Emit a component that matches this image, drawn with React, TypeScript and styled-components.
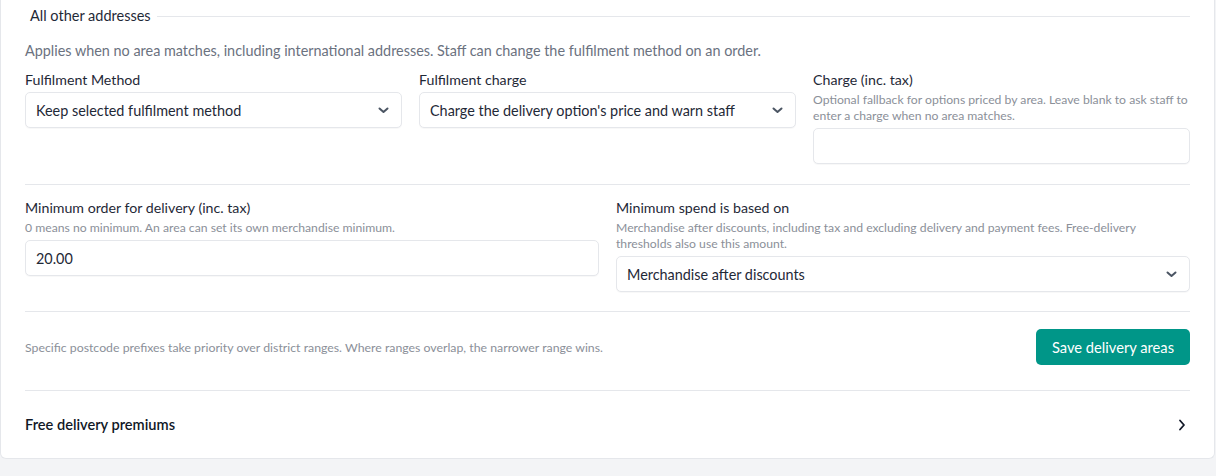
import React from "react";
import styled, { createGlobalStyle } from "styled-components";

const GlobalStyle = createGlobalStyle`
  html, body {
    margin: 0;
    padding: 0;
    background: #f3f4f6;
  }
  body {
    font-family: Lato, "Noto Sans", "Liberation Sans", sans-serif;
    color: #1f2937;
    -webkit-font-smoothing: antialiased;
  }
  * {
    box-sizing: border-box;
  }
`;

const Page = styled.div`
  padding-bottom: 17px;
`;

const Card = styled.div`
  width: 1215px;
  background: #ffffff;
  border: 1px solid #e5e7eb;
  border-top: none;
  border-radius: 0 0 6px 6px;
  padding: 0 24px;
`;

const Fieldset = styled.section`
  padding: 7px 0 20px;
  border-bottom: 1px solid #e5e7eb;
`;

const LegendRow = styled.div`
  display: flex;
  align-items: center;
  gap: 6px;
  font-size: 14.5px;
  line-height: 18px;
  color: #1f2937;
  padding-left: 5px;

  &:after {
    content: "";
    flex: 1;
    height: 1px;
    background: #e5e7eb;
  }
`;

const Intro = styled.p`
  margin: 16px 0 9px;
  font-size: 14.4px;
  line-height: 20px;
  color: #6b7280;
`;

const Grid = styled.div<{ $cols: number }>`
  display: grid;
  grid-template-columns: repeat(${p => p.$cols}, 1fr);
  column-gap: 17px;
  align-items: start;
`;

const Field = styled.div`
  display: flex;
  flex-direction: column;
`;

const Label = styled.label`
  font-size: 14.2px;
  line-height: 20px;
  color: #1f2937;
  margin-bottom: 2px;
`;

const Help = styled.div`
  font-size: 12.2px;
  line-height: 16px;
  color: #8b9099;
  margin-bottom: 4px;
`;

const Control = styled.div`
  height: 36px;
  display: flex;
  align-items: center;
  justify-content: space-between;
  padding: 0 12px 0 10px;
  border: 1px solid #e5e7eb;
  border-radius: 5px;
  background: #fff;
  box-shadow: 0 1px 1px rgba(0, 0, 0, 0.03);
  font-size: 14.4px;
  color: #1f2937;
`;

const Section = styled.section`
  padding: 13px 0 19px;
  border-bottom: 1px solid #e5e7eb;
`;

const Footer = styled.div`
  display: flex;
  align-items: center;
  justify-content: space-between;
  padding: 17px 0 25px;
  border-bottom: 1px solid #e5e7eb;
`;

const FooterNote = styled.span`
  font-size: 12.3px;
  color: #8b9099;
`;

const SaveButton = styled.button`
  height: 36px;
  padding: 0 16px;
  border: none;
  border-radius: 5px;
  background: #009688;
  color: #fff;
  font-family: inherit;
  font-size: 14.7px;
`;

const Disclosure = styled.div`
  display: flex;
  align-items: center;
  justify-content: space-between;
  height: 67px;
  font-size: 14.6px;
  font-weight: 600;
  color: #111827;
  padding-right: 4px;
`;

const Chevron = () => (
  <svg width="11" height="7" viewBox="0 0 11 7" fill="none">
    <path d="M1.5 1.5l4 3.5 4-3.5" stroke="#4b5563" strokeWidth="2" strokeLinecap="round" strokeLinejoin="round" />
  </svg>
);

const ChevronRight = () => (
  <svg width="8" height="12" viewBox="0 0 8 12" fill="none">
    <path d="M2 1.5l4 4.5-4 4.5" stroke="#111827" strokeWidth="1.8" strokeLinecap="round" strokeLinejoin="round" />
  </svg>
);

const Select = ({ value }: { value: string }) => (
  <Control>
    <span>{value}</span>
    <Chevron />
  </Control>
);

export default function App() {
  return (
    <Page>
      <GlobalStyle />
      <Card>
        <Fieldset>
          <LegendRow>All other addresses</LegendRow>
          <Intro>
            Applies when no area matches, including international addresses. Staff can change the fulfilment method on an order.
          </Intro>
          <Grid $cols={3}>
            <Field>
              <Label>Fulfilment Method</Label>
              <Select value="Keep selected fulfilment method" />
            </Field>
            <Field>
              <Label>Fulfilment charge</Label>
              <Select value="Charge the delivery option's price and warn staff" />
            </Field>
            <Field>
              <Label>Charge (inc. tax)</Label>
              <Help>
                Optional fallback for options priced by area. Leave blank to ask staff to enter a charge when no area matches.
              </Help>
              <Control />
            </Field>
          </Grid>
        </Fieldset>
        <Section>
          <Grid $cols={2}>
            <Field>
              <Label>Minimum order for delivery (inc. tax)</Label>
              <Help>0 means no minimum. An area can set its own merchandise minimum.</Help>
              <Control>20.00</Control>
            </Field>
            <Field>
              <Label>Minimum spend is based on</Label>
              <Help>
                Merchandise after discounts, including tax and excluding delivery and payment fees. Free-delivery thresholds also use this amount.
              </Help>
              <Select value="Merchandise after discounts" />
            </Field>
          </Grid>
        </Section>
        <Footer>
          <FooterNote>
            Specific postcode prefixes take priority over district ranges. Where ranges overlap, the narrower range wins.
          </FooterNote>
          <SaveButton>Save delivery areas</SaveButton>
        </Footer>
        <Disclosure>
          <span>Free delivery premiums</span>
          <ChevronRight />
        </Disclosure>
      </Card>
    </Page>
  );
}
